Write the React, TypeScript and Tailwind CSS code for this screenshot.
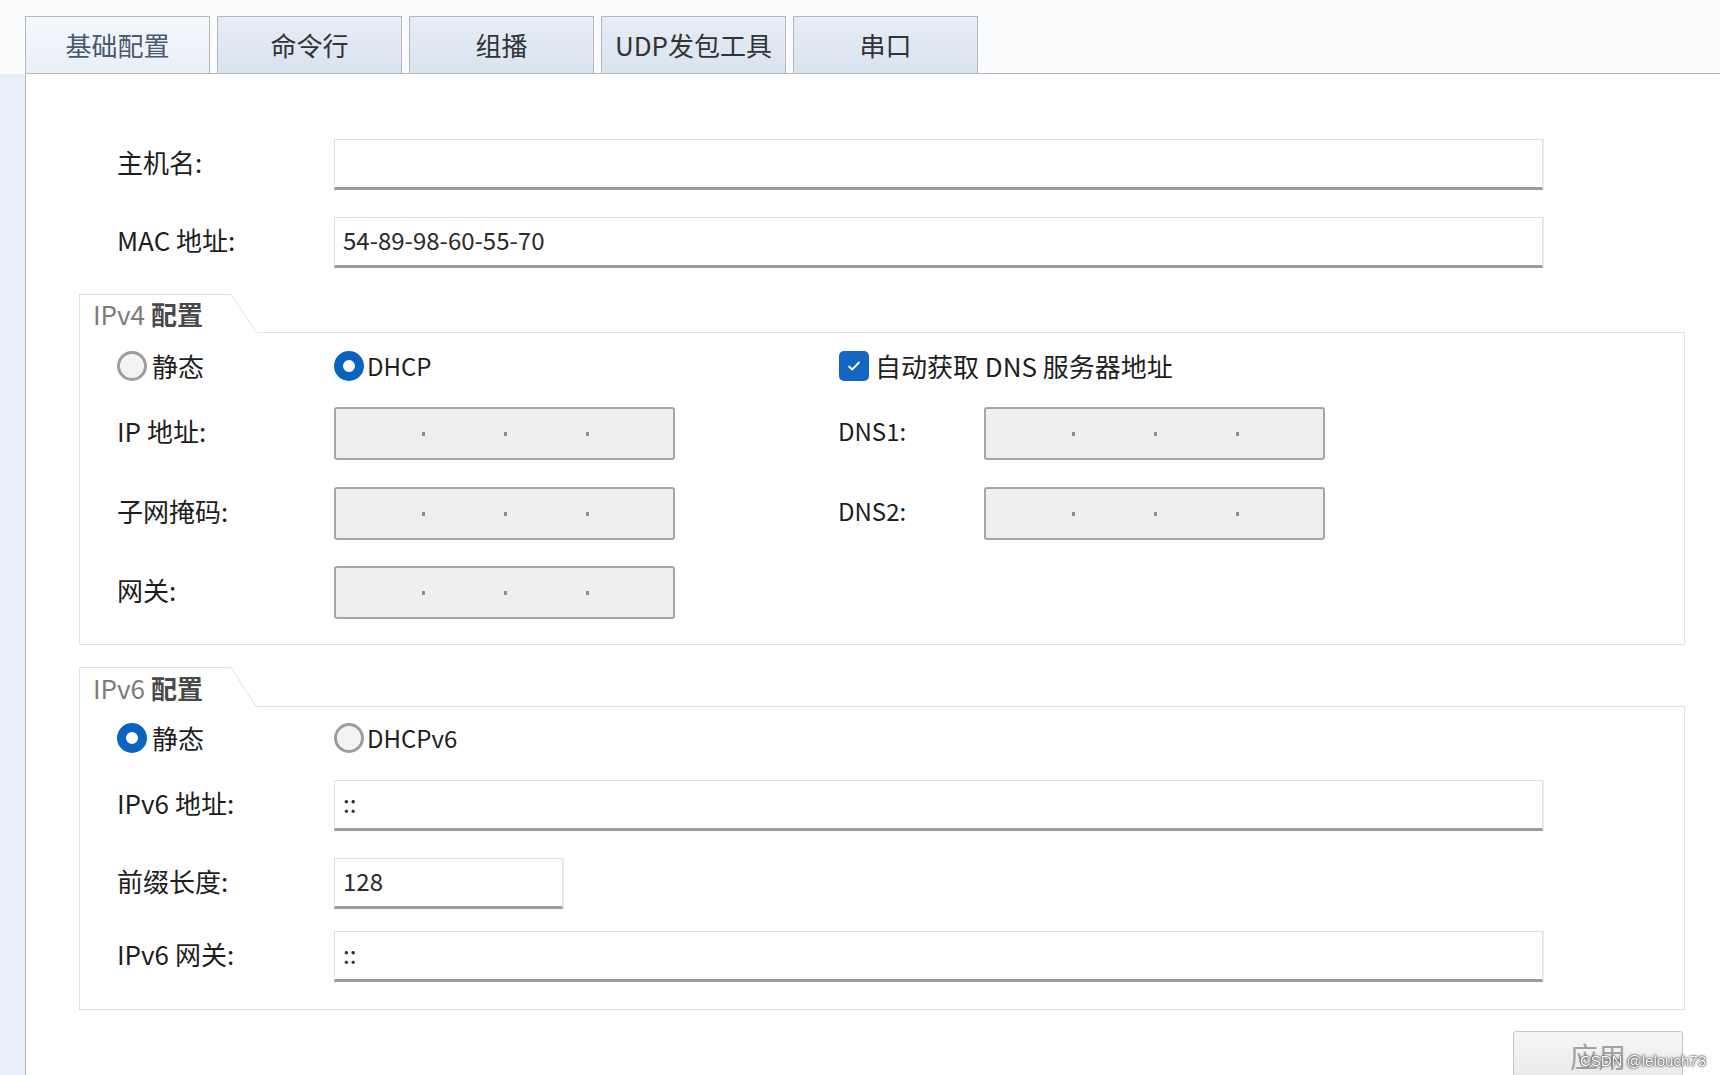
import React from 'react'

const TABS = ['基础配置', '命令行', '组播', 'UDP发包工具', '串口']

function TextBox({ value = '', width = 'w-[1209px]' }: { value?: string; width?: string }) {
  return (
    <div
      className={`${width} h-[51px] bg-white border border-[#e0e0e0] border-b-[3px] border-b-[#9c9c9c] shadow-[1px_0_1px_#ececec] flex items-center pl-[8px] text-[24px] text-[#2a2a2a]`}
    >
      <span className="-translate-y-[2px]">{value}</span>
    </div>
  )
}

function IpBox() {
  return (
    <div className="w-[341px] h-[53px] bg-[#efefef] border-2 border-[#a6a6a6] rounded-[3px] flex items-center pl-[86px] gap-[79px]">
      <span className="w-[3px] h-[4px] bg-[#8a8aa0]" />
      <span className="w-[3px] h-[4px] bg-[#8a8aa0]" />
      <span className="w-[3px] h-[4px] bg-[#8a8aa0]" />
    </div>
  )
}

function Radio({ checked }: { checked?: boolean }) {
  return checked ? (
    <span className="w-[30px] h-[30px] rounded-full border-[9px] border-[#0b63c0] bg-white shrink-0" />
  ) : (
    <span className="w-[30px] h-[30px] rounded-full border-[3px] border-[#9d9d9d] bg-[#f3f3f3] shrink-0" />
  )
}

function Checkbox() {
  return (
    <span className="w-[30px] h-[30px] rounded-[5px] bg-[#1466c3] flex items-center justify-center shrink-0">
      <svg width="16" height="16" viewBox="0 0 16 16" fill="none">
        <path d="M3 8.5l3.2 3L13 4.5" stroke="white" strokeWidth="1.8" strokeLinecap="round" strokeLinejoin="round" />
      </svg>
    </span>
  )
}

function Row({ label, children, className = '' }: { label: string; children: React.ReactNode; className?: string }) {
  return (
    <div className={`flex items-center ${className}`}>
      <div className="w-[217px] shrink-0 text-[26px] text-[#1e1e1e] leading-none -translate-y-[3px]">{label}</div>
      {children}
    </div>
  )
}

function Group({ title, height, children }: { title: string; height: string; children: React.ReactNode }) {
  return (
    <div className="w-[1606px]">
      {/* legend tab */}
      <div className={`flex items-end ${height}`}>
        <div className="w-[152px] h-full border-l border-t border-[#e2e2e2] flex items-center pl-[13px] text-[26px] leading-none">
          <span className="text-[#7c7c7c]">{title}</span>
          <span className="ml-[6px] font-bold text-[#4a4a4a]">配置</span>
        </div>
        <svg width="26" height="100%" viewBox="0 0 26 40" preserveAspectRatio="none" className="h-full shrink-0">
          <path d="M0 0.5 L25.5 39.5" stroke="#e2e2e2" strokeWidth="1" fill="none" />
        </svg>
        <div className="flex-1 border-b border-[#e2e2e2]" />
      </div>
      <div className="border-l border-r border-b border-[#e2e2e2] pl-[37px]">{children}</div>
    </div>
  )
}

export default function App() {
  return (
    <div className="w-[1720px] h-[1075px] overflow-hidden bg-white flex flex-col relative font-['Noto_Sans_CJK_SC','Noto_Sans',sans-serif]">
      {/* Tabs */}
      <div className="h-[74px] flex shrink-0 bg-[#fbfcfe]">
        <div className="w-[25px] shrink-0" />
        <div className="flex-1 flex items-end gap-[7px] border-b border-[#b4b9bf]">
          {TABS.map((t, i) => (
            <div
              key={t}
              className={`w-[185px] h-[57px] flex items-center justify-center border border-b-0 border-[#b4b9bf] text-[26px] leading-none ${
                i === 0
                  ? 'bg-gradient-to-b from-[#f5f8fc] to-[#e9eff8] text-[#4a5a6c]'
                  : 'bg-gradient-to-b from-[#e6edf6] to-[#d9e3ef] text-[#333]'
              }`}
            >
              {t}
            </div>
          ))}
        </div>
      </div>

      {/* Body */}
      <div className="flex-1 flex">
        <div className="w-[26px] shrink-0 bg-[#e8eff9] border-r border-[#b4b9bf]" />
        <div className="flex-1 bg-white">
          <div className="pl-[91px]">
            <Row label="主机名:" className="mt-[65px]">
              <TextBox />
            </Row>
            <Row label="MAC 地址:" className="mt-[27px]">
              <TextBox value="54-89-98-60-55-70" />
            </Row>
          </div>

          <div className="pl-[53px] mt-[26px]">
            <Group title="IPv4" height="h-[39px]">
              <div className="pt-[17px] h-[49px] flex items-center">
                <div className="w-[217px] flex items-center gap-[5px]">
                  <Radio />
                  <span className="text-[26px] text-[#1e1e1e] leading-none">静态</span>
                </div>
                <div className="w-[505px] flex items-center gap-[3px]">
                  <Radio checked />
                  <span className="text-[24px] text-[#1e1e1e] leading-none">DHCP</span>
                </div>
                <div className="flex items-center gap-[6px]">
                  <Checkbox />
                  <span className="text-[26px] text-[#1e1e1e] leading-none">自动获取 DNS 服务器地址</span>
                </div>
              </div>
              <Row label="IP 地址:" className="mt-[25px]">
                <IpBox />
                <div className="ml-[163px] w-[146px] text-[24px] text-[#1e1e1e] leading-none -translate-y-[3px]">DNS1:</div>
                <IpBox />
              </Row>
              <Row label="子网掩码:" className="mt-[27px]">
                <IpBox />
                <div className="ml-[163px] w-[146px] text-[24px] text-[#1e1e1e] leading-none -translate-y-[3px]">DNS2:</div>
                <IpBox />
              </Row>
              <Row label="网关:" className="mt-[26px] mb-[25px]">
                <IpBox />
              </Row>
            </Group>
          </div>

          <div className="pl-[53px] mt-[22px]">
            <Group title="IPv6" height="h-[40px]">
              <div className="pt-[15px] h-[47px] flex items-center">
                <div className="w-[217px] flex items-center gap-[5px]">
                  <Radio checked />
                  <span className="text-[26px] text-[#1e1e1e] leading-none">静态</span>
                </div>
                <div className="flex items-center gap-[3px]">
                  <Radio />
                  <span className="text-[24px] text-[#1e1e1e] leading-none">DHCPv6</span>
                </div>
              </div>
              <Row label="IPv6 地址:" className="mt-[26px]">
                <TextBox value="::" />
              </Row>
              <Row label="前缀长度:" className="mt-[27px]">
                <TextBox value="128" width="w-[229px]" />
              </Row>
              <Row label="IPv6 网关:" className="mt-[22px] mb-[27px]">
                <TextBox value="::" />
              </Row>
            </Group>
          </div>

          <div className="flex justify-end pr-[37px] mt-[21px]">
            <div className="w-[170px] h-[60px] rounded-[3px] border border-[#c6c6c6] bg-gradient-to-b from-[#f7f7f7] to-[#e6e6e6] flex justify-center pt-[10px] text-[28px] leading-none text-[#a2a2a2]">
              应用
            </div>
          </div>
        </div>
      </div>

      <div className="absolute right-[14px] bottom-[7px] text-[15px] leading-none text-white font-['Liberation_Sans',sans-serif] [text-shadow:0_0_1px_#333,0_0_2px_#555,0_0_3px_#777]">
        CSDN @lelouch73
      </div>
    </div>
  )
}
